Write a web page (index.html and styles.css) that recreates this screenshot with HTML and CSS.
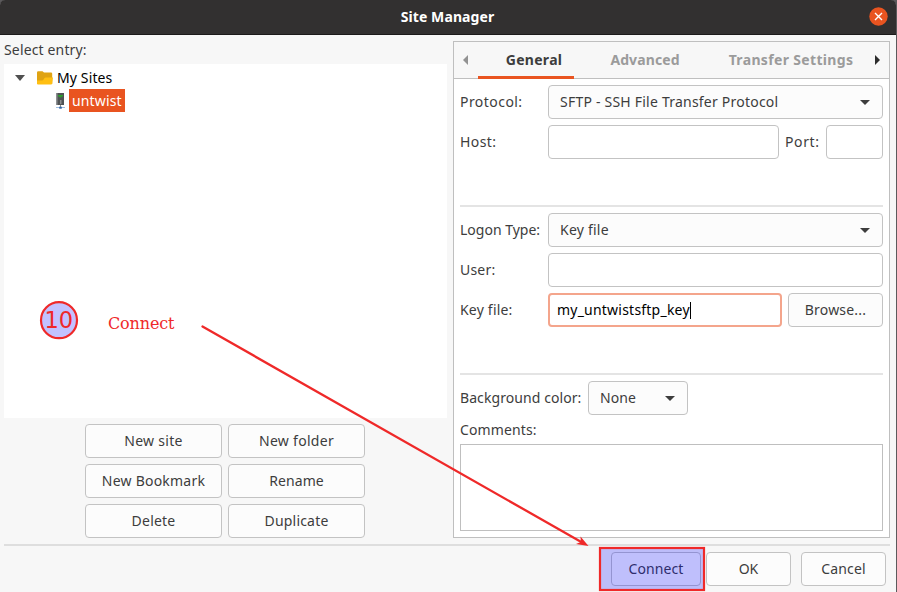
FILE: index.html
```html
<!DOCTYPE html>
<html lang="en">
<head>
<meta charset="utf-8">
<title>Site Manager</title>
<link rel="stylesheet" href="styles.css">
</head>
<body>
<div class="window">
  <header class="titlebar">
    <h1 class="title">Site Manager</h1>
    <button class="close" aria-label="Close"><svg width="19" height="19" viewBox="0 0 19 19"><circle cx="9.5" cy="9.5" r="9.2" fill="#e95420"/><path d="M6 6l7 7M13 6l-7 7" stroke="#fff" stroke-width="1.4"/></svg></button>
  </header>
  <main class="content">
    <section class="sites">
      <div class="sites-label"><span class="t-select">Select entry:</span></div>
      <div class="tree">
        <div class="node">
          <svg class="expander" width="10" height="6" viewBox="0 0 10 6"><path d="M0 0h10L5 6z" fill="#505050"/></svg>
          <svg class="folder" width="16" height="14" viewBox="0 0 16 14"><path d="M0 1.500Q0 .3 1.200 .3H5.500L7 1.400H14Q15.200 1.400 15.200 2.600V13H1Q0 13 0 12z" fill="#dfa313"/><path d="M1 13.500Q0 13.500 0 12.500V9.500H5Q6 9.500 6.600 8.500L7.500 7Q7.800 6.500 8.500 6.500H16L15.200 12.500Q15 13.500 14 13.500z" fill="#ffbf12"/></svg>
          <span class="t-mysites">My Sites</span>
        </div>
        <div class="node child">
          <svg class="server" width="10" height="16" viewBox="0 0 10 16"><path d="M1 0h8v12H1z" fill="#505355"/><path d="M1 0h1.500v12H1z" fill="#8d9092"/><path d="M3 2h5v1.500H6.500V4.500h-2V3.500H3z" fill="#2aa02c"/><path d="M5 7h1.500v4H5z" fill="#8a8c8d"/><path d="M5 12h1v2H5z" fill="#888"/><path d="M1 14h9v1H1z" fill="#9dbce0"/><path d="M4.200 13.700h2.600v2H4.200z" fill="#3465a4"/></svg>
          <span class="selected"><span class="t-untwist">untwist</span></span>
        </div>
      </div>
      <div class="site-actions">
        <button class="btn"><span class="t-newsite">New site</span></button>
        <button class="btn"><span class="t-newfolder">New folder</span></button>
        <button class="btn"><span class="t-bookmark">New Bookmark</span></button>
        <button class="btn"><span class="t-rename">Rename</span></button>
        <button class="btn"><span class="t-delete">Delete</span></button>
        <button class="btn"><span class="t-duplicate">Duplicate</span></button>
      </div>
    </section>
    <section class="panel">
      <nav class="tabs">
        <svg class="prev" width="5" height="10" viewBox="0 0 5 10"><path d="M5 0v10L0 5z" fill="#929292"/></svg>
        <span class="tab active"><span class="t-general">General</span></span>
        <span class="tab tab-adv"><span class="t-advanced">Advanced</span></span>
        <span class="tab tab-tr"><span class="t-transfer">Transfer Settings</span></span>
        <svg class="next" width="5" height="10" viewBox="0 0 5 10"><path d="M0 0v10l5-5z" fill="#2d2d2d"/></svg>
      </nav>
      <div class="form">
        <div class="group g1">
          <div class="row"><label class="lbl"><span class="t-protocol">Protocol:</span></label><div class="combo grow"><span class="t-sftp">SFTP - SSH File Transfer Protocol</span><svg width="10" height="5" viewBox="0 0 10 5"><path d="M0 0h10L5 5z" fill="#3d3d3d"/></svg></div></div>
          <div class="row"><label class="lbl"><span class="t-host">Host:</span></label><div class="field grow"></div><label class="port-lbl"><span class="t-port">Port:</span></label><div class="field port"></div></div>
        </div>
        <div class="group g2">
          <div class="row"><label class="lbl"><span class="t-logon">Logon Type:</span></label><div class="combo grow"><span class="t-keyfile">Key file</span><svg width="10" height="5" viewBox="0 0 10 5"><path d="M0 0h10L5 5z" fill="#3d3d3d"/></svg></div></div>
          <div class="row"><label class="lbl"><span class="t-user">User:</span></label><div class="field grow"></div></div>
          <div class="row"><label class="lbl"><span class="t-keylabel">Key file:</span></label><div class="field focused grow"><span class="t-value">my_untwistsftp_key</span><i class="caret"></i></div><button class="btn browse"><span class="t-browse">Browse...</span></button></div>
        </div>
        <div class="group g3">
          <div class="row"><label class="bg-lbl"><span class="t-bg">Background color:</span></label><div class="combo color"><span class="t-none">None</span><svg width="10" height="5" viewBox="0 0 10 5"><path d="M0 0h10L5 5z" fill="#3d3d3d"/></svg></div></div>
          <label class="comments-lbl"><span class="t-comments">Comments:</span></label>
          <div class="comments"></div>
        </div>
      </div>
    </section>
  </main>
  <footer class="footer">
    <button class="btn f-connect"><span class="t-connect">Connect</span></button>
    <button class="btn f-ok"><span class="t-ok">OK</span></button>
    <button class="btn f-cancel"><span class="t-cancel">Cancel</span></button>
  </footer>
  <svg class="notes" width="897" height="592" viewBox="0 0 897 592">
    <circle cx="59" cy="320.200" r="18" fill="#00f" fill-opacity=".24" stroke="#ef2929" stroke-width="2.200"/>
    <text x="44.500" y="328" class="note-num">10</text>
    <text x="108" y="329" class="note-text" textLength="66.500">Connect</text>
    <path d="M202.500 326.500L583 543" stroke="#ef2929" stroke-width="2.300" stroke-linecap="round"/>
    <path d="M588.500 546L576 543.900L580.800 541.900L580.500 536.600z" fill="#ef2929"/>
    <rect x="600" y="548" width="104" height="42" fill="#00f" fill-opacity=".24" stroke="#ef2929" stroke-width="2.200"/>
  </svg>
</div>
</body>
</html>
```
FILE: styles.css
```css
* { box-sizing: border-box; }
body { margin: 0; width: 897px; height: 592px; overflow: hidden; background: #5c5a5c; font: 14px/20px "Noto Sans", sans-serif; color: #3d3d3d; }
span { white-space: nowrap; }
svg { flex: none; display: block; }
.window { position: relative; width: 896px; height: 592px; background: #f7f7f7; display: flex; flex-direction: column; border-radius: 6px 6px 0 0; }
.titlebar { height: 35px; background: #323030; border-bottom: 1px solid #1c1a1a; border-radius: 5px 5px 0 0; display: grid; grid-template-columns: 1fr auto 1fr; align-items: center; padding: 0 8px 2px 7px; }
.title { grid-column: 2; margin: 1px 0 0; font-size: 14px; line-height: 20px; font-weight: 700; color: #fff; letter-spacing: .1px; }
.close { justify-self: end; border: 0; padding: 0; background: none; }
.content { height: 503px; padding-top: 6px; display: flex; }
.sites { width: 453px; padding-left: 4px; display: flex; flex-direction: column; }
.sites-label { height: 23px; line-height: 18px; }
.t-select { letter-spacing: .15px; }
.tree { width: 443px; height: 354px; background: #fff; padding-top: 2px; color: #000; }
.node { height: 23px; display: flex; align-items: center; padding-left: 11px; }
.expander { margin-right: 12px; }
.folder { margin-right: 4px; }
.t-mysites { letter-spacing: .12px; }
.child { padding-left: 51px; }
.server { margin-right: 4px; }
.selected { background: #e95420; color: #fff; height: 23px; width: 56px; padding: 2px 0 0 3px; }
.t-untwist { letter-spacing: .15px; }
.site-actions { padding: 6px 0 0 81px; display: grid; grid-template-columns: 137px 137px; gap: 6px; }
.btn { height: 34px; border: 1px solid #c3c3c3; border-radius: 4px; background: #fcfcfc; font: inherit; color: inherit; padding: 0; text-align: center; line-height: 32px; display: flex; justify-content: center; }
.t-newsite { letter-spacing: .3px; }
.t-newfolder { letter-spacing: .3px; }
.t-bookmark { letter-spacing: .22px; }
.t-rename { letter-spacing: .1px; }
.t-delete { letter-spacing: .2px; }
.t-duplicate { letter-spacing: .2px; }
.panel { width: 437px; height: 497px; border: 1px solid #bfbfbf; background: #fff; }
.tabs { height: 37px; background: #f7f7f7; border-bottom: 1px solid #bfbfbf; display: flex; align-items: center; padding-left: 9px; font-weight: 700; color: #9b9b9b; }
.tab { height: 37px; display: flex; justify-content: center; line-height: 36px; width: 96px; }
.active { margin-left: 10px; color: #3d3d3d; border-bottom: 3px solid #e95420; padding-left: 16px; }
.t-general { letter-spacing: .3px; }
.tab-adv { margin-left: 23px; }
.t-advanced { letter-spacing: .1px; }
.tab-tr { margin-left: 20px; width: 156px; }
.t-transfer { letter-spacing: .34px; }
.next { margin-left: 6px; }
.form { padding: 6px; }
.row { display: flex; align-items: center; height: 34px; margin-bottom: 6px; }
.group { display: flex; flex-direction: column; }
.g1 { height: 122px; border-bottom: 2px solid #e4e4e4; }
.g2 { height: 168px; padding-top: 6px; border-bottom: 2px solid #e4e4e4; }
.g3 { padding-top: 6px; }
.lbl { width: 88px; }
.lbl, .bg-lbl, .port-lbl { line-height: 20px; }
.t-protocol { letter-spacing: .45px; }
.t-host { letter-spacing: .4px; }
.t-port { letter-spacing: .6px; }
.t-user { letter-spacing: .2px; }
.t-keylabel { letter-spacing: .2px; }
.grow { flex: 1; }
.combo { height: 34px; border: 1px solid #c3c3c3; border-radius: 4px; background: #fcfcfc; display: flex; align-items: center; justify-content: space-between; padding: 0 12px 0 11px; }
.t-sftp { letter-spacing: .22px; }
.t-keyfile { letter-spacing: .22px; }
.t-none { letter-spacing: .1px; }
.field { height: 34px; border: 1px solid #c3c3c3; border-radius: 4px; background: #fff; }
.port-lbl { width: 47px; padding-left: 6px; }
.port { width: 57px; }
.focused { border: 2px solid #f4a58c; display: flex; align-items: center; padding-left: 7px; color: #000; }
.t-value { letter-spacing: .22px; }
.caret { width: 1px; height: 17px; background: #000; }
.browse { width: 95px; margin-left: 6px; }
.t-browse { letter-spacing: .2px; }
.bg-lbl { width: 128px; }
.t-bg { letter-spacing: .08px; }
.color { width: 100px; }
.comments-lbl { height: 23px; line-height: 18px; }
.t-comments { letter-spacing: .12px; }
.comments { height: 87px; border: 1px solid #bfbfbf; }
.footer { height: 48px; margin-top: 6px; width: 886px; margin-left: 4px; border-top: 2px solid #dedede; display: flex; justify-content: flex-end; padding: 6px 4px 0 0; }
.f-connect { width: 90px; margin-right: 5px; }
.t-connect { letter-spacing: .1px; }
.f-ok { width: 85px; margin-right: 10px; }
.f-cancel { width: 85px; }
.t-cancel { letter-spacing: .15px; }
.notes { position: absolute; left: 0; top: 0; }
.note-num { font: 22.500px "DejaVu Sans", sans-serif; fill: #ef2929; }
.note-text { font: 16px "DejaVu Serif", serif; fill: #ef2929; }
```
